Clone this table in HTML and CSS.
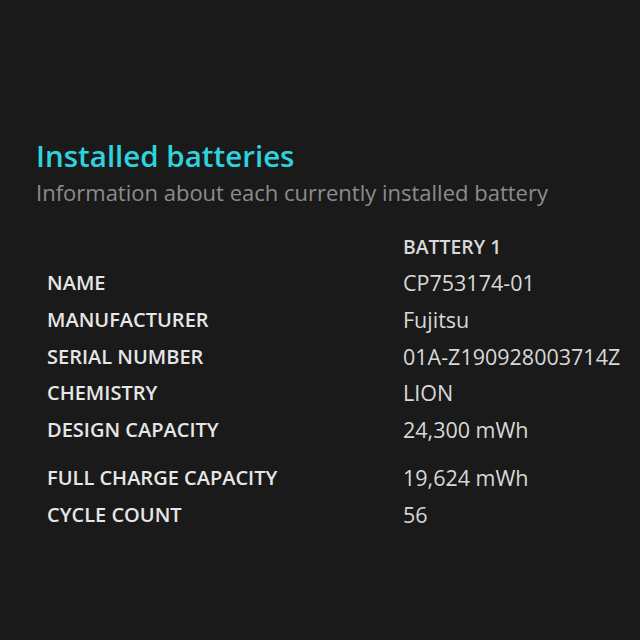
FILE: index.html
```html
<!DOCTYPE html>
<html>
  <head>
    <link rel="stylesheet" href="styles.css">
  </head>
  <body>
    <div class="page">
      <!-- Judul bagian baterai -->
      <h1 class="title">Installed batteries</h1>
      <p class="subtitle">Information about each currently installed battery</p>

      <!-- Tabel info baterai -->
      <div class="battery-table">
        <div class="row head">
          <span class="label"></span>
          <span class="value col-head">BATTERY 1</span>
        </div>
        <div class="row">
          <span class="label">NAME</span>
          <span class="value">CP753174-01</span>
        </div>
        <div class="row">
          <span class="label">MANUFACTURER</span>
          <span class="value">Fujitsu</span>
        </div>
        <div class="row">
          <span class="label">SERIAL NUMBER</span>
          <span class="value">01A-Z190928003714Z</span>
        </div>
        <div class="row">
          <span class="label">CHEMISTRY</span>
          <span class="value">LION</span>
        </div>
        <div class="row spaced">
          <span class="label">DESIGN CAPACITY</span>
          <span class="value">24,300 mWh</span>
        </div>
        <div class="row">
          <span class="label">FULL CHARGE CAPACITY</span>
          <span class="value">19,624 mWh</span>
        </div>
        <div class="row">
          <span class="label">CYCLE COUNT</span>
          <span class="value">56</span>
        </div>
      </div>
    </div>
  </body>
</html>
```

FILE: styles.css
```css
/* Latar gelap seperti laporan baterai */
body {
  margin: 0;
  background-color: #1a1a1a;
  font-family: "Open Sans", "Noto Sans", sans-serif;
}

.page {
  padding: 136px 0 0 36px;
}

.title {
  margin: 0;
  color: #2fd3de;
  font-size: 29.5px;
  font-weight: 600;
  line-height: 40px;
}

.subtitle {
  margin: 0;
  color: #8c8c8c;
  font-size: 22px;
  line-height: 32px;
}

.battery-table {
  margin-top: 20px;
  padding-left: 11px;
}

.row {
  display: flex;
  height: 36.6px;
  align-items: center;
}

.row.spaced {
  margin-bottom: 12px;
}

.label {
  width: 356px;
  color: #e6e6e6;
  font-size: 20px;
  font-weight: 600;
}

.value {
  color: #d8d8d8;
  font-size: 21.5px;
}

.col-head {
  font-size: 19.4px;
  font-weight: 600;
}
```
